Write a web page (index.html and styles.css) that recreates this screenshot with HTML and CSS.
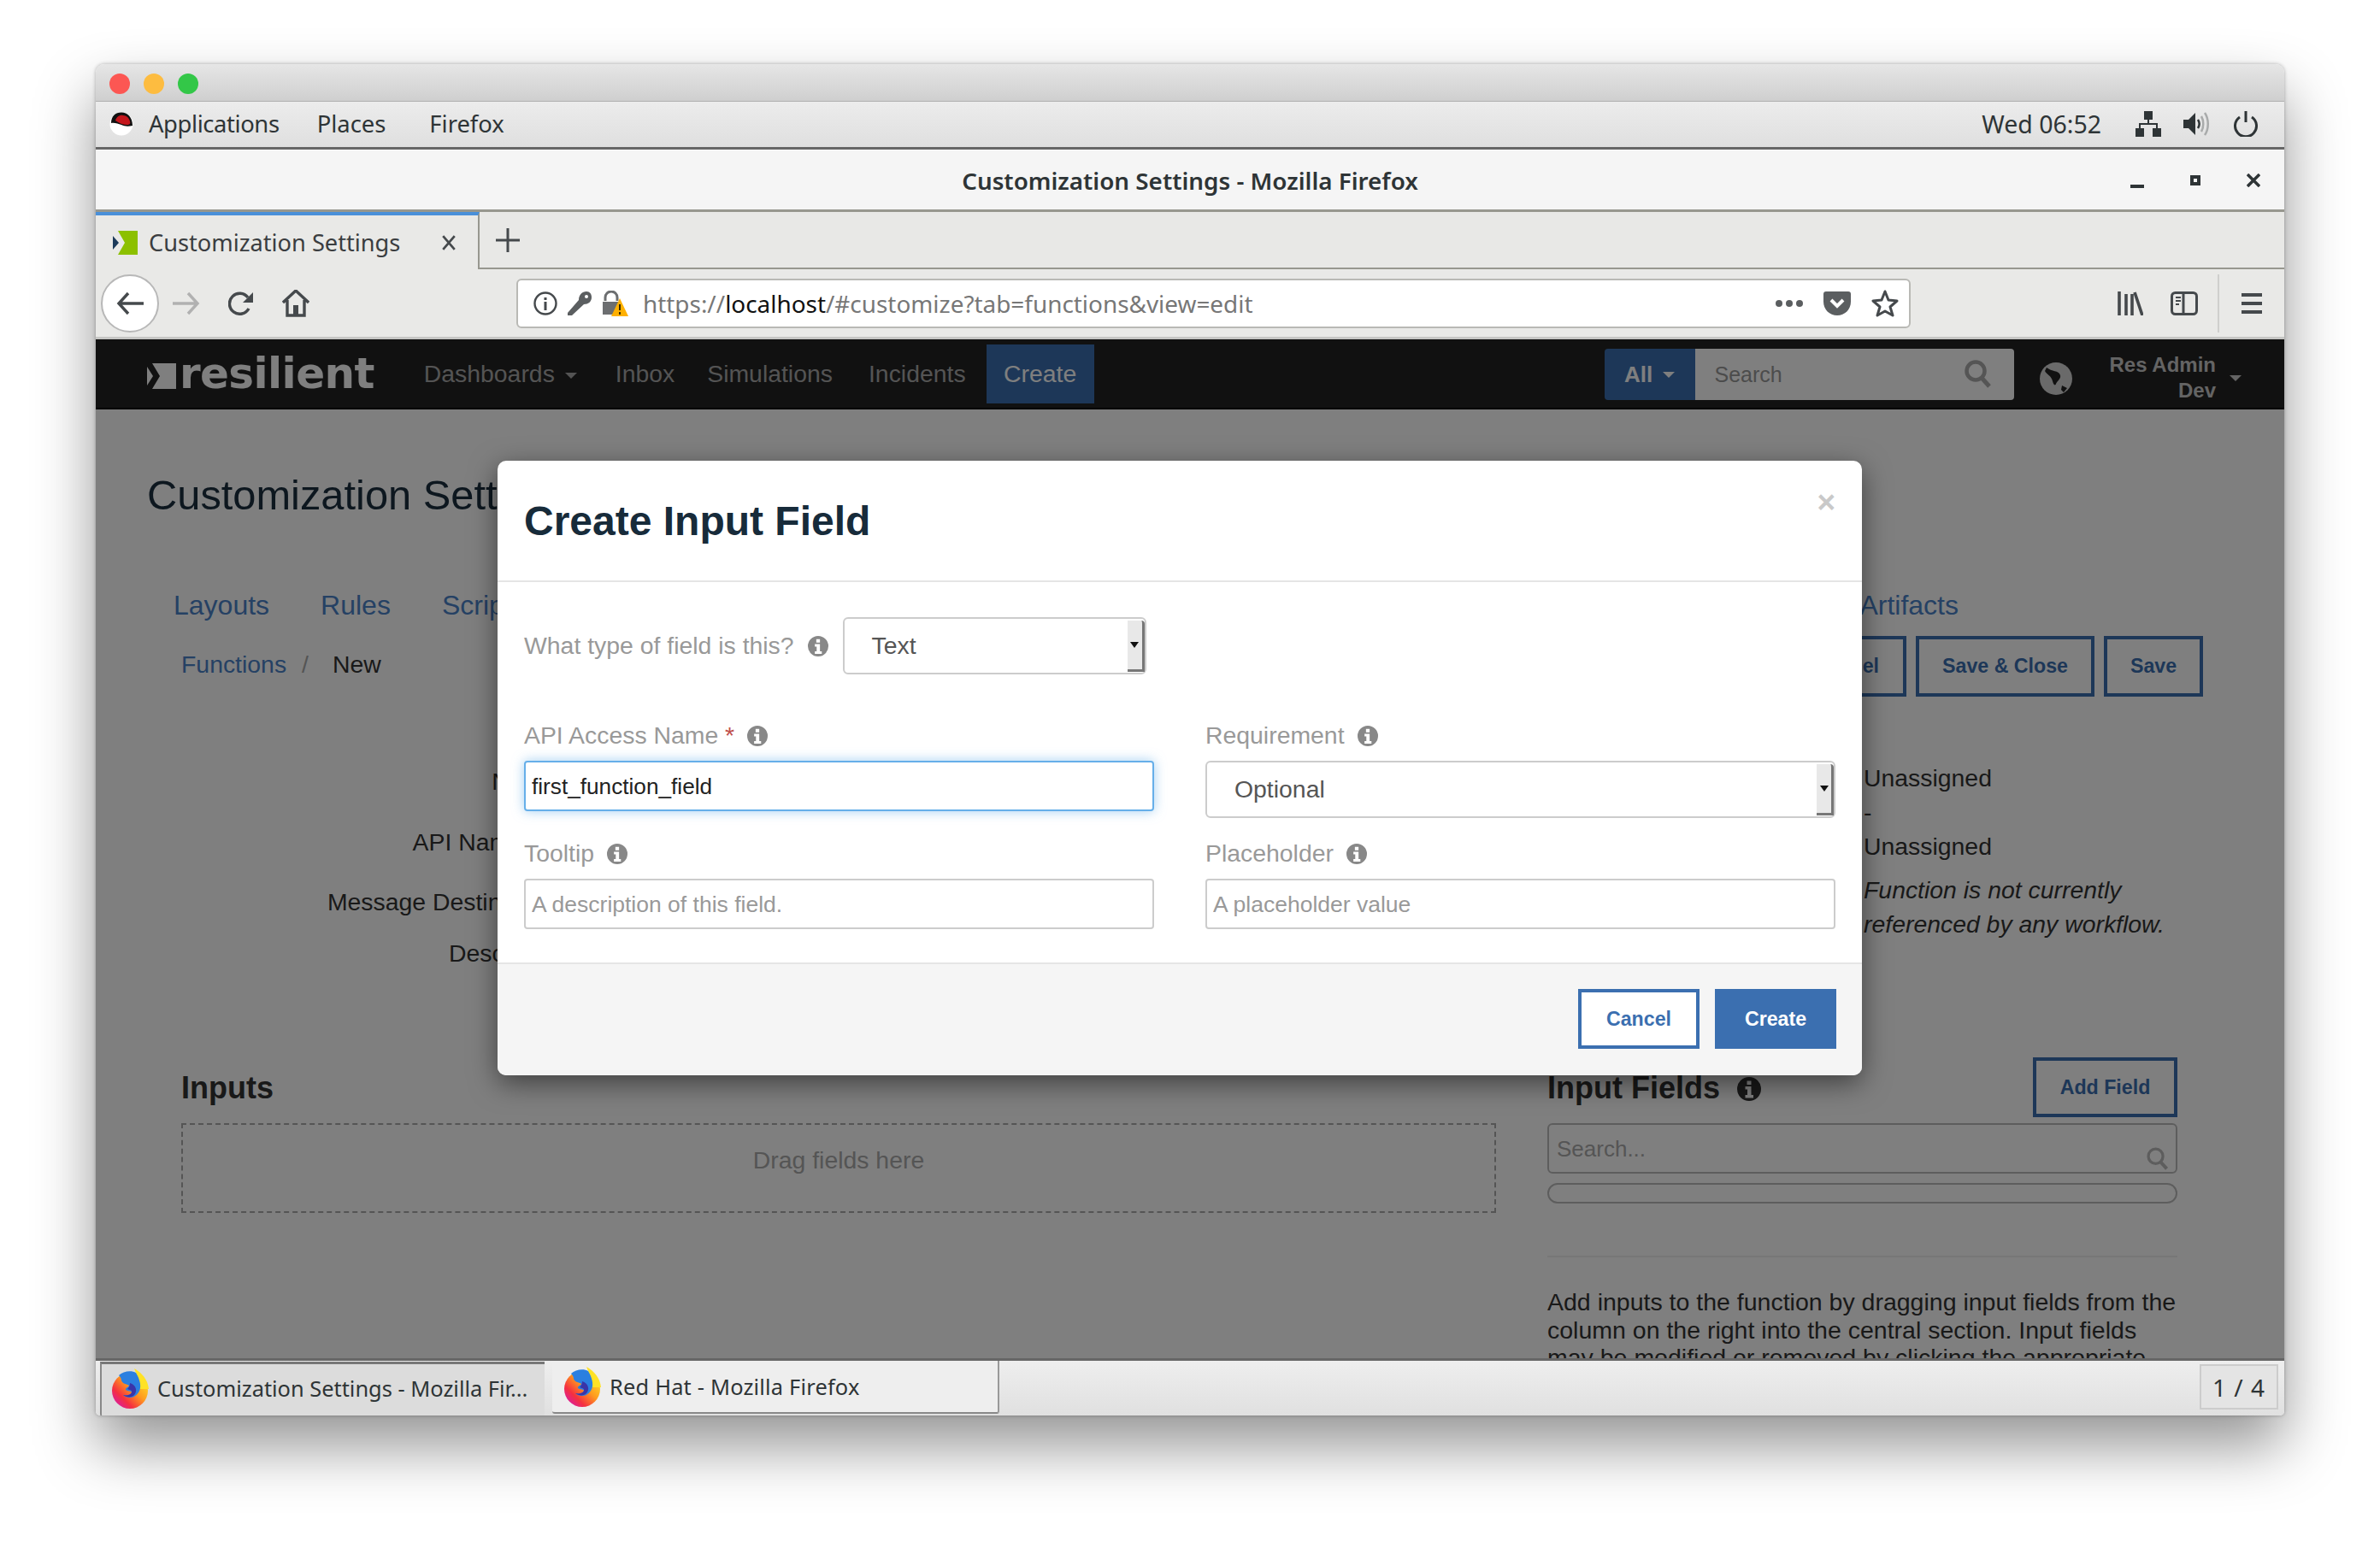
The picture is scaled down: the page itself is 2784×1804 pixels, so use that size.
FILE: index.html
```html
<!DOCTYPE html>
<html lang="en">
<head>
    <meta charset="UTF-8">
    <title>Customization Settings - Mozilla Firefox</title>
    <link rel="stylesheet" href="styles.css">
</head>
<body>
    <div class="window">
        <div class="mac-bar">
            <span class="dot dot-red"></span>
            <span class="dot dot-yellow"></span>
            <span class="dot dot-green"></span>
        </div>

        <div class="gnome-bar">
            <svg class="redhat" viewBox="0 0 28 28">
                <circle cx="14" cy="14" r="13.500" fill="#fff"/>
                <path d="M2 13C2 5 7 .5 14 .5S27 6 27 16c-5 1-9 1-13-1-4-1-8-3-12-2z" fill="#111"/>
                <path d="M7 10c1-4 5-7 9-6 4 0 7 3 8 7 1 3-1 4-3 4-5 0-10-2-14-5z" fill="#c4161c"/>
            </svg>
            <span class="gnome-item gnome-apps">Applications</span>
            <span class="gnome-item gnome-places">Places</span>
            <span class="gnome-item gnome-firefox">Firefox</span>
            <span class="gnome-clock">Wed 06:52</span>
            <svg class="tray tray-network" viewBox="0 0 30 30">
                <path d="M10 0h10v10h-4v4h10v6h4v10H20V20h4v-4H6v4h4v10H0V20h4v-6h10v-4h-4z" fill="#2e3436"/>
            </svg>
            <svg class="tray tray-sound" viewBox="0 0 30 30">
                <path d="M0 10h6l8-8v26l-8-8H0z" fill="#2e3436"/>
                <path d="M17 10c2 3 2 7 0 10" stroke="#2e3436" stroke-width="2.500" fill="none"/>
                <path d="M21 6c3 5 3 13 0 18M25 2c5 7 5 19 0 26" stroke="#a9abab" stroke-width="2.500" fill="none"/>
            </svg>
            <svg class="tray tray-power" viewBox="0 0 30 30">
                <path d="M8 7a12.500 12.500 0 1 0 14 0" stroke="#2e3436" stroke-width="3" fill="none"/>
                <path d="M15 0v13" stroke="#2e3436" stroke-width="3"/>
            </svg>
        </div>

        <div class="title-bar">
            <span class="title-text">Customization Settings - Mozilla Firefox</span>
            <div class="win-controls">
                <span class="win-min"></span>
                <span class="win-max"></span>
                <svg class="win-close" viewBox="0 0 16 16"><path d="M1 1l14 14M15 1L1 15" stroke="#2e3436" stroke-width="3.500"/></svg>
            </div>
        </div>

        <div class="tab-bar">
            <div class="tab">
                <svg class="favicon" viewBox="0 0 29 28">
                    <path d="M0 6l7 8-7 8z" fill="#1c3a5a"/>
                    <path d="M6 0h23v28H6l8-14z" fill="#8cc000"/>
                </svg>
                <span class="tab-title">Customization Settings</span>
                <svg class="tab-close" viewBox="0 0 16 16"><path d="M2 1l12 14M14 1L2 15" stroke="#45494c" stroke-width="2.400"/></svg>
            </div>
            <svg class="new-tab" viewBox="0 0 28 28"><path d="M14 0v28M0 14h28" stroke="#45494c" stroke-width="3"/></svg>
        </div>

        <div class="toolbar">
            <div class="nav-back">
                <svg viewBox="0 0 32 28"><path d="M14 2L3 14l11 12M3 14h29" stroke="#45494c" stroke-width="3.400" fill="none"/></svg>
            </div>
            <svg class="tool-icon tool-forward" viewBox="0 0 32 28"><path d="M18 2l11 12-11 12M29 14H0" stroke="#b1b1b1" stroke-width="3.400" fill="none"/></svg>
            <svg class="tool-icon tool-reload" viewBox="0 0 30 28"><path d="M24 20a12 12 0 1 1-1-13" stroke="#45494c" stroke-width="3.400" fill="none"/><path d="M29 1v12H17z" fill="#45494c"/></svg>
            <svg class="tool-icon tool-home" viewBox="0 0 32 32"><path d="M1 15L16 1l15 14M6 12v18h20V12" stroke="#45494c" stroke-width="3.400" fill="none"/><path d="M13 18h6v12h-6z" fill="#45494c"/></svg>

            <div class="url-bar">
                <svg class="url-icon url-info" viewBox="0 0 28 28"><circle cx="14" cy="14" r="12.500" stroke="#45494c" stroke-width="2.400" fill="none"/><path d="M14 7v3M14 12v10" stroke="#45494c" stroke-width="3"/></svg>
                <svg class="url-icon url-key" viewBox="0 0 28 28"><path d="M0 25L13 10C13 4 17 0 22 0c4 0 6 3 6 7 0 5-4 8-9 8L5 28H0z" fill="#5b5e60"/><circle cx="22" cy="6" r="2" fill="#fff"/></svg>
                <svg class="url-icon url-lock" viewBox="0 0 30 30">
                    <path d="M3 12V8a7 7 0 0 1 14 0v4" stroke="#6c6e70" stroke-width="3" fill="none"/>
                    <path d="M0 13h20v15H0z" fill="#6c6e70"/>
                    <path d="M20 9l10 21H10z" fill="#ffb000"/>
                    <path d="M20 16v7M20 25v3" stroke="#3a2a00" stroke-width="2"/>
                </svg>
                <span class="url-text">https://<span class="url-host">localhost</span>/#customize?tab=functions&amp;view=edit</span>
                <span class="url-more"><i></i><i></i><i></i></span>
                <svg class="url-icon url-pocket" viewBox="0 0 32 28"><path d="M3 0h26a3 3 0 0 1 3 3v9c0 9-7 16-16 16S0 21 0 12V3a3 3 0 0 1 3-3z" fill="#5b5e60"/><path d="M9 10l7 7 7-7" stroke="#fff" stroke-width="4" fill="none"/></svg>
                <svg class="url-icon url-star" viewBox="0 0 32 32"><path d="M16 2l4 10 10 1-8 7 3 10-9-5-9 5 3-10-8-7 10-1z" stroke="#45494c" stroke-width="3" fill="none" stroke-linejoin="round"/></svg>
            </div>

            <svg class="tool-icon tool-library" viewBox="0 0 30 28"><path d="M2 0v28M10 3v25M17 3v25M20 1l9 27" stroke="#45494c" stroke-width="3.600" fill="none"/></svg>
            <svg class="tool-icon tool-sidebar" viewBox="0 0 32 28"><rect x="1.500" y="1.500" width="29" height="25" rx="4" stroke="#45494c" stroke-width="3" fill="none"/><path d="M15 2v24" stroke="#45494c" stroke-width="3"/><path d="M6 7h6M6 11h6M6 15h4" stroke="#45494c" stroke-width="2"/></svg>
            <span class="tool-sep"></span>
            <svg class="tool-icon tool-menu" viewBox="0 0 24 24"><path d="M0 2h24M0 12h24M0 22h24" stroke="#45494c" stroke-width="4"/></svg>
        </div>

        <div class="viewport">
            <nav class="app-nav">
                <div class="logo">
                    <svg viewBox="0 0 34 30"><path d="M0 4l7 11-7 11z" fill="#fff"/><path d="M6 0h28v30H6l9-15z" fill="#fff"/></svg>
                    <span class="logo-word">resilient</span>
                </div>
                <ul class="app-links">
                    <li class="link-dash">Dashboards <span class="caret"></span></li>
                    <li class="link-inbox">Inbox</li>
                    <li class="link-sim">Simulations</li>
                    <li class="link-inc">Incidents</li>
                    <li class="link-create">Create</li>
                </ul>
                <div class="nav-search">
                    <span class="search-all">All <span class="caret caret-light"></span></span>
                    <div class="search-box">
                        <span>Search</span>
                        <svg viewBox="0 0 32 34"><circle cx="13" cy="13" r="10.500" stroke="#555" stroke-width="4.500" fill="none"/><path d="M20 21l9 10" stroke="#555" stroke-width="5"/></svg>
                    </div>
                </div>
                <svg class="globe" viewBox="0 0 38 38">
                    <circle cx="19" cy="19" r="19" fill="#d4d4d4"/>
                    <path d="M8 6c6 5 14 3 16 9 1 4-3 6-5 10-1 3-3 1-4-3-1-6-7-8-9-12zM26 27l6 3-4 5-3-3z" fill="#222"/>
                </svg>
                <div class="user-menu">
                    <div class="user-name">
                        <span>Res Admin</span>
                        <span>Dev</span>
                    </div>
                    <span class="caret"></span>
                </div>
            </nav>

            <main class="page">
                <h1>Customization Settings</h1>
                <ul class="page-tabs">
                    <li>Layouts</li>
                    <li>Rules</li>
                    <li>Scripts</li>
                    <li class="page-tab-artifacts">Artifacts</li>
                </ul>
                <div class="crumb-row">
                    <div class="crumbs">
                        <a>Functions</a><span class="crumb-sep">/</span><span>New</span>
                    </div>
                    <div class="crumb-actions">
                        <button class="btn-outline btn-cancel">Cancel</button>
                        <button class="btn-outline btn-saveclose">Save &amp; Close</button>
                        <button class="btn-outline btn-save">Save</button>
                    </div>
                </div>
                <div class="fn-form">
                    <div class="fn-labels">
                        <div class="fn-label fn-name">Name</div>
                        <div class="fn-label fn-api">API Name</div>
                        <div class="fn-label fn-dest">Message Destination</div>
                        <div class="fn-label fn-desc">Description</div>
                    </div>
                    <div class="fn-status">
                        <p>Unassigned</p>
                        <p>-</p>
                        <p>Unassigned</p>
                        <p class="fn-note">Function is not currently<br>referenced by any workflow.</p>
                    </div>
                </div>
                <div class="designer">
                    <section class="inputs">
                        <h2>Inputs</h2>
                        <div class="dropzone">Drag fields here</div>
                    </section>
                    <section class="fields">
                        <div class="fields-head">
                            <h2>Input Fields <svg class="info info-dark" viewBox="0 0 28 28"><use href="#info-glyph"/></svg></h2>
                            <button class="btn-outline btn-add">Add Field</button>
                        </div>
                        <div class="fields-search">
                            <span>Search...</span>
                            <svg viewBox="0 0 32 34"><circle cx="13" cy="13" r="10.500" stroke="#bbb" stroke-width="4" fill="none"/><path d="M20 21l9 10" stroke="#bbb" stroke-width="5"/></svg>
                        </div>
                        <div class="fields-bar"></div>
                        <hr class="fields-rule">
                        <p class="fields-help">Add inputs to the function by dragging input fields from the column on the right into the central section. Input fields may be modified or removed by clicking the appropriate icon.</p>
                    </section>
                </div>
            </main>

            <div class="backdrop"></div>

            <div class="modal">
                <div class="modal-header">
                    <h3>Create Input Field</h3>
                    <span class="modal-close">×</span>
                </div>
                <div class="modal-body">
                    <div class="type-row">
                        <label>What type of field is this?</label>
                        <svg class="info" viewBox="0 0 28 28"><use href="#info-glyph"/></svg>
                        <div class="fake-select type-select">
                            <span>Text</span>
                            <span class="select-arrow"></span>
                        </div>
                    </div>
                    <div class="field-grid">
                        <div class="field">
                            <label>API Access Name <em>*</em><svg class="info" viewBox="0 0 28 28"><use href="#info-glyph"/></svg></label>
                            <input class="text-input is-focus" value="first_function_field">
                        </div>
                        <div class="field">
                            <label>Requirement<svg class="info" viewBox="0 0 28 28"><use href="#info-glyph"/></svg></label>
                            <div class="fake-select">
                                <span>Optional</span>
                                <span class="select-arrow"></span>
                            </div>
                        </div>
                        <div class="field field-low">
                            <label>Tooltip<svg class="info" viewBox="0 0 28 28"><use href="#info-glyph"/></svg></label>
                            <input class="text-input" placeholder="A description of this field.">
                        </div>
                        <div class="field field-low">
                            <label>Placeholder<svg class="info" viewBox="0 0 28 28"><use href="#info-glyph"/></svg></label>
                            <input class="text-input" placeholder="A placeholder value">
                        </div>
                    </div>
                </div>
                <div class="modal-footer">
                    <button class="btn-outline btn-modal">Cancel</button>
                    <button class="btn-primary">Create</button>
                </div>
            </div>
        </div>

        <div class="task-bar">
            <div class="task task-active">
                <svg class="ff-icon" viewBox="0 0 44 47"><use href="#firefox-glyph"/></svg>
                <span>Customization Settings - Mozilla Fir...</span>
            </div>
            <div class="task">
                <svg class="ff-icon" viewBox="0 0 44 47"><use href="#firefox-glyph"/></svg>
                <span>Red Hat - Mozilla Firefox</span>
            </div>
            <div class="pager">1 / 4</div>
        </div>
    </div>

    <!-- shared icons -->
    <svg class="icon-defs" width="0" height="0">
        <defs>
            <linearGradient id="ff-flame" x1="0.9" y1="0.1" x2="0.15" y2="0.85">
                <stop offset="0" stop-color="#ffe226"/>
                <stop offset="0.45" stop-color="#ff9a1f"/>
                <stop offset="0.8" stop-color="#f5303f"/>
                <stop offset="1" stop-color="#e0218a"/>
            </linearGradient>
            <g id="info-glyph">
                <path fill-rule="evenodd" fill="currentColor" d="M14 0a14 14 0 1 1 0 28a14 14 0 0 1 0-28zM11.500 4.500h5v4.500h-5zM9.500 11h7v10h2.500v3.500h-9.500V21h2.500v-6.500h-2.500z"/>
            </g>
            <g id="firefox-glyph">
                <circle cx="22" cy="26" r="21" fill="url(#ff-flame)"/>
                <path d="M27 0c9 5 16 13 17 24H32C33 15 30 7 27 0z" fill="#ffe226"/>
                <path d="M9 8C14 3 24 2 29 5c3 5 6 12 5 18-1 6-6 11-12 11-3 0-6-1-8-3 4 1 9 0 10-3 0-2-5-1-7-3-1-2 3-3 4-5-3-2-8-2-9-6 0-2-1-4-3-6z" fill="#2b7fe0"/>
                <path d="M22 17c7 2 10 10 4 15-3 2-8 2-12-1 4 1 9 0 10-3 1-3-3-3-5-4 2-2 3-4 3-7z" fill="#3a34a8"/>
            </g>
        </defs>
    </svg>
</body>
</html>
```

FILE: styles.css
```css
* {
    box-sizing: border-box;
}

html, body {
    margin: 0;
    height: 100%;
    overflow: hidden;
}

body {
    background: #fff;
    padding: 75px 112px 0;
    font-family: "Liberation Sans", Arial, sans-serif;
    font-size: 28.4px;
    color: #333;
}

.icon-defs {
    position: absolute;
}

.window {
    width: 2560px;
    height: 1581px;
    display: flex;
    flex-direction: column;
    border-radius: 10px 10px 5px 5px;
    box-shadow: 0 36px 70px rgba(0, 0, 0, 0.42), 0 0 4px rgba(0, 0, 0, 0.3);
    overflow: hidden;
}

/* mac chrome */
.mac-bar {
    height: 44px;
    flex: none;
    display: flex;
    align-items: center;
    gap: 16px;
    padding-left: 16px;
    background: linear-gradient(#e6e6e6, #cfcfcf);
    border-bottom: 1px solid #b0b0b0;
}

.dot {
    width: 24px;
    height: 24px;
    border-radius: 50%;
    margin-top: 3px;
}

.dot-red { background: #fc5753; }
.dot-yellow { background: #fdbc40; }
.dot-green { background: #33c748; }

/* gnome top bar */
.gnome-bar {
    height: 56px;
    flex: none;
    display: flex;
    align-items: center;
    padding: 0 0 2px 16px;
    background: linear-gradient(#ececec, #dfdfdf);
    border-bottom: 3px solid #666;
    font-family: "Noto Sans", sans-serif;
    font-size: 27.4px;
    color: #2e3436;
}

.redhat {
    width: 28px;
    height: 28px;
}

.gnome-apps { margin-left: 18px; letter-spacing: -0.4px; }
.gnome-places { margin-left: 44px; }
.gnome-firefox { margin-left: 51px; }

.gnome-clock {
    margin-left: auto;
    font-size: 28.5px;
}

.tray {
    width: 30px;
    height: 30px;
}

.tray-network { margin-left: 40px; }
.tray-sound { margin-left: 26px; }
.tray-power { margin-left: 28px; margin-right: 30px; }

/* window title */
.title-bar {
    height: 73px;
    flex: none;
    position: relative;
    display: flex;
    align-items: center;
    justify-content: center;
    background: #f5f5f5;
    border-top: 1px solid #fff;
    border-bottom: 3px solid #97978f;
    font-family: "Noto Sans", sans-serif;
    font-size: 27.8px;
    font-weight: 600;
    color: #2e3436;
}

.win-controls {
    position: absolute;
    right: 28px;
    top: 0;
    bottom: 0;
    display: flex;
    align-items: center;
}

.win-min {
    width: 16px;
    height: 4px;
    margin-top: 14px;
    background: #2e3436;
}

.win-max {
    width: 12px;
    height: 12px;
    margin-left: 54px;
    border: 4px solid #2e3436;
}

.win-close {
    width: 16px;
    height: 16px;
    margin-left: 54px;
}

/* firefox tabs */
.tab-bar {
    height: 67px;
    flex: none;
    display: flex;
    align-items: center;
    background: #e8e8e6;
    border-bottom: 2px solid #97978f;
}

.tab {
    width: 449px;
    height: 67px;
    display: flex;
    align-items: center;
    padding: 0 0 0 20px;
    border-top: 4px solid #4a90d9;
    border-right: 2px solid #97978f;
    background: #e9e9e7;
    font-family: "Noto Sans", sans-serif;
    font-size: 27.2px;
    color: #3a3d40;
    margin-bottom: -2px;
    align-self: flex-start;
}

.favicon {
    width: 29px;
    height: 28px;
}

.tab-title {
    margin-left: 13px;
}

.tab-close {
    width: 18px;
    height: 18px;
    margin-left: auto;
    margin-right: 25px;
}

.new-tab {
    width: 28px;
    height: 28px;
    margin-left: 19px;
}

/* firefox toolbar */
.toolbar {
    height: 82px;
    flex: none;
    display: flex;
    align-items: center;
    padding-left: 6px;
    background: #e9e9e7;
    border-bottom: 3px solid #c6c6c4;
}

.nav-back {
    width: 68px;
    height: 68px;
    flex: none;
    display: flex;
    align-items: center;
    justify-content: center;
    border: 2px solid #b8b8b8;
    border-radius: 50%;
    background: #fff;
}

.nav-back svg {
    width: 32px;
    height: 28px;
}

.tool-icon {
    flex: none;
    height: 28px;
}

.tool-forward { width: 32px; margin-left: 16px; }
.tool-reload { width: 30px; margin-left: 33px; }
.tool-home { width: 32px; height: 32px; margin-left: 33px; }

.url-bar {
    width: 1631px;
    height: 58px;
    flex: none;
    display: flex;
    align-items: center;
    margin-left: 242px;
    padding-left: 18px;
    background: #fff;
    border: 2px solid #b9b9b5;
    border-radius: 6px;
    font-family: "Noto Sans", sans-serif;
    font-size: 27.9px;
    color: #777;
}

.url-icon {
    flex: none;
    width: 28px;
    height: 28px;
}

.url-key { margin-left: 12px; }
.url-lock { width: 30px; height: 30px; margin-left: 13px; }

.url-text {
    margin-left: 17px;
}

.url-host {
    color: #111;
}

.url-more {
    margin-left: auto;
    display: flex;
    gap: 4px;
}

.url-more i {
    width: 8px;
    height: 8px;
    border-radius: 50%;
    background: #5b5e60;
}

.url-pocket { width: 32px; margin-left: 24px; }
.url-star { width: 32px; height: 32px; margin-left: 24px; margin-right: 12px; }

.tool-library { width: 30px; margin-left: 242px; }
.tool-sidebar { width: 32px; margin-left: 32px; }

.tool-sep {
    width: 2px;
    height: 68px;
    margin-left: 23px;
    background: #cfcfcd;
}

.tool-menu {
    width: 24px;
    height: 24px;
    margin-left: 26px;
}

/* page inside the browser */
.viewport {
    flex: 1;
    position: relative;
    overflow: hidden;
    background: #fff;
    min-height: 0;
}

.app-nav {
    height: 82px;
    display: flex;
    align-items: center;
    background: #222;
    border-bottom: 2px solid #000;
}

.logo {
    display: flex;
    align-items: center;
    margin-left: 60px;
    color: #fff;
}

.logo svg {
    width: 34px;
    height: 30px;
    margin-top: 6px;
}

.logo-word {
    margin-left: 4px;
    font-family: "DejaVu Sans", sans-serif;
    font-weight: 700;
    font-size: 50px;
    line-height: 1;
    letter-spacing: -0.6px;
}

.app-links {
    list-style: none;
    display: flex;
    align-items: center;
    margin: 0;
    padding: 0;
    font-size: 28.4px;
    color: #a8a8a8;
}

.link-dash { margin-left: 58px; }
.link-inbox { margin-left: 45px; }
.link-sim { margin-left: 38px; }
.link-inc { margin-left: 42px; }

.link-create {
    margin-left: 24px;
    height: 69px;
    width: 126px;
    display: flex;
    align-items: center;
    justify-content: center;
    background: #3b6fb0;
    color: #fff;
}

.caret {
    display: inline-block;
    width: 0;
    height: 0;
    margin-left: 4px;
    vertical-align: middle;
    border-top: 7px solid currentColor;
    border-left: 7px solid transparent;
    border-right: 7px solid transparent;
}

.nav-search {
    display: flex;
    margin-left: auto;
    height: 60px;
    margin-top: 2px;
}

.search-all {
    width: 106px;
    display: flex;
    align-items: center;
    justify-content: center;
    gap: 8px;
    background: #3b6fb0;
    border-radius: 4px 0 0 4px;
    color: #fff;
    font-size: 26px;
    font-weight: 700;
}

.search-box {
    width: 373px;
    display: flex;
    align-items: center;
    justify-content: space-between;
    padding: 0 26px 0 23px;
    background: #fff;
    border-radius: 0 4px 4px 0;
    font-size: 25px;
    color: #999;
}

.search-box svg {
    width: 32px;
    height: 34px;
}

.search-box svg circle,
.search-box svg path {
    stroke: #aaa;
}

.globe {
    width: 38px;
    height: 38px;
    margin-left: 30px;
    margin-top: 11px;
}

.user-menu {
    display: flex;
    align-items: center;
    margin-left: 44px;
    margin-right: 50px;
    margin-top: 10px;
    color: #c8c8c8;
}

.user-name {
    display: flex;
    flex-direction: column;
    align-items: flex-end;
    font-size: 24px;
    font-weight: 700;
    line-height: 30px;
}

.user-menu .caret {
    margin-left: 16px;
}

.page {
    height: 1110px;
    overflow: hidden;
    padding: 0 0 0 61px;
    color: #333;
}

.page h1 {
    margin: 0 0 0 -1px;
    padding-top: 64px;
    font-size: 48.8px;
    font-weight: 400;
    line-height: 72px;
    color: #1a2e3f;
}

.page-tabs {
    list-style: none;
    display: flex;
    margin: 73px 0 0;
    padding: 0 0 0 30px;
    font-size: 32px;
    color: #4a82c8;
    line-height: 40px;
}

.page-tabs li {
    margin-right: 60px;
}

.page-tab-artifacts {
    margin-left: auto;
    margin-right: 381px !important;
}

.crumb-row {
    display: flex;
    align-items: flex-start;
    justify-content: space-between;
    padding: 16px 95px 0 39px;
}

.crumbs {
    display: flex;
    margin-top: 16px;
    line-height: 34px;
}

.crumbs a {
    color: #4a82c8;
}

.crumb-sep {
    margin: 0 28px 0 18px;
    color: #aaa;
}

.crumb-actions {
    display: flex;
    gap: 11px;
}

.btn-outline {
    height: 71px;
    padding: 0;
    background: #fff;
    border: 4px solid #3b6fb0;
    color: #3b6fb0;
    font-family: "Liberation Sans", sans-serif;
    font-size: 23.2px;
    font-weight: 700;
}

.btn-cancel { width: 140px; }
.btn-saveclose { width: 209px; }
.btn-save { width: 116px; }

.fn-form {
    display: flex;
    justify-content: space-between;
    height: 428px;
    padding-top: 75px;
}

.fn-labels {
    width: 494px;
    display: flex;
    flex-direction: column;
    text-align: right;
}

.fn-label {
    line-height: 36px;
}

.fn-name { margin-top: 6px; padding-right: 16px; }
.fn-api { margin-top: 35px; padding-right: 55px; }
.fn-dest { margin-top: 34px; padding-right: 19px; }
.fn-desc { margin-top: 24px; }

.fn-status {
    width: 492px;
    margin-left: auto;
    line-height: 40px;
}

.fn-status p {
    margin: 0;
    line-height: 40px;
}

.fn-note {
    margin-top: 11px !important;
    font-style: italic;
}

.designer {
    display: grid;
    grid-template-columns: 1538px 737px;
    column-gap: 60px;
    padding-left: 39px;
}

.designer h2 {
    margin: 0;
    font-size: 36px;
    line-height: 44px;
    color: #333;
}

.inputs h2 {
    margin-top: 8px;
}

.dropzone {
    height: 105px;
    margin-top: 19px;
    padding-top: 25px;
    border: 2px dashed #aaa;
    text-align: center;
    color: #aaa;
}

.fields-head {
    display: flex;
    justify-content: space-between;
    align-items: flex-start;
}

.fields-head h2 {
    margin-top: 8px;
}

.btn-add {
    width: 169px;
    height: 70px;
    margin-top: -6px;
}

.fields-search {
    height: 59px;
    margin-top: 7px;
    display: flex;
    justify-content: space-between;
    align-items: flex-start;
    padding: 13px 8px 0 9px;
    background: #fff;
    border: 2px solid #bbb;
    border-radius: 6px;
    font-size: 26px;
    color: #aaa;
}

.fields-search svg {
    width: 26px;
    height: 28px;
    margin-top: 13px;
}

.fields-bar {
    height: 24px;
    margin-top: 11px;
    border: 2px solid #bbb;
    border-radius: 12px;
    background: #fff;
}

.fields-rule {
    height: 2px;
    margin: 61px 0 0;
    border: 0;
    background: #eee;
}

.fields-help {
    margin: 36px 0 0;
    font-size: 28.5px;
    line-height: 32.5px;
}

.info {
    width: 24px;
    height: 24px;
    color: #888;
    vertical-align: -3px;
}

.info-dark {
    width: 28px;
    height: 28px;
    margin-left: 10px;
    color: #333;
}

.backdrop {
    position: absolute;
    inset: 0;
    background: rgba(0, 0, 0, 0.5);
}

/* dialog */
.modal {
    position: absolute;
    left: 470px;
    top: 142px;
    width: 1596px;
    height: 719px;
    display: flex;
    flex-direction: column;
    background: #fff;
    border-radius: 10px;
    box-shadow: 0 9px 32px rgba(0, 0, 0, 0.5);
}

.modal-header {
    height: 142px;
    flex: none;
    position: relative;
    padding: 43px 30px 0 31px;
    border-bottom: 2px solid #e5e5e5;
}

.modal-header h3 {
    margin: 0;
    font-size: 48px;
    line-height: 56px;
    color: #172b3a;
}

.modal-close {
    position: absolute;
    right: 31px;
    top: 30px;
    font-size: 37px;
    font-weight: 700;
    line-height: 1;
    color: #c9c9c9;
}

.modal-body {
    flex: 1;
    padding: 0 31px;
}

.type-row {
    display: flex;
    align-items: center;
    margin-top: 41px;
    height: 67px;
    font-size: 28.4px;
    color: #999;
}

.type-row .info {
    margin-left: 16px;
}

.fake-select {
    height: 67px;
    display: flex;
    align-items: center;
    justify-content: space-between;
    padding-left: 32px;
    background: #fff;
    border: 2px solid #ccc;
    border-radius: 6px;
    color: #555;
}

.type-select {
    width: 355px;
    margin-left: 17px;
}

.select-arrow {
    width: 20px;
    height: 60px;
    display: flex;
    align-items: center;
    justify-content: center;
    background: #e8e8e8;
    border-right: 3px solid #777;
    border-bottom: 3px solid #777;
    border-radius: 0 4px 0 0;
}

.select-arrow::after {
    content: "";
    border-top: 7px solid #111;
    border-left: 5px solid transparent;
    border-right: 5px solid transparent;
}

.field-grid {
    display: grid;
    grid-template-columns: 737px 737px;
    column-gap: 60px;
    margin-top: 54px;
}

.field label {
    display: block;
    height: 34px;
    line-height: 34px;
    color: #999;
}

.field label em {
    font-style: normal;
    color: #c0504d;
}

.field .info {
    margin-left: 15px;
}

.text-input {
    display: block;
    width: 100%;
    height: 59px;
    margin-top: 13px;
    padding: 2px 7px 0;
    background: #fff;
    border: 2px solid #ccc;
    border-radius: 4px;
    font-family: "Liberation Sans", sans-serif;
    font-size: 26.2px;
    color: #222;
    outline: none;
}

.text-input::placeholder {
    color: #999;
    font-size: 26.5px;
}

.is-focus {
    border-color: #66afe9;
    box-shadow: 0 0 14px rgba(102, 175, 233, 0.6);
}

.field-grid .fake-select {
    margin-top: 13px;
}

.field-low {
    margin-top: 24px;
}

.modal-footer {
    height: 132px;
    flex: none;
    display: flex;
    justify-content: flex-end;
    align-items: flex-start;
    gap: 18px;
    padding: 29px 30px 0 0;
    background: #f5f5f5;
    border-top: 2px solid #e5e5e5;
    border-radius: 0 0 10px 10px;
}

.btn-modal,
.btn-primary {
    width: 142px;
    height: 70px;
}

.btn-primary {
    padding: 0;
    background: #3b6fb0;
    border: 0;
    color: #fff;
    font-family: "Liberation Sans", sans-serif;
    font-size: 23.2px;
    font-weight: 700;
}

/* bottom window list */
.task-bar {
    height: 67px;
    flex: none;
    display: flex;
    align-items: flex-start;
    padding-left: 5px;
    background: linear-gradient(#eee, #e0e0e0);
    border-top: 3px solid #666;
    font-family: "Noto Sans", sans-serif;
    font-size: 25.4px;
    color: #2e3436;
}

.task {
    width: 523px;
    height: 62px;
    display: flex;
    align-items: center;
    padding-left: 13px;
    margin-left: 9px;
    background: #eee;
    border-right: 2px solid #999;
    border-bottom: 2px solid #888;
    border-radius: 0 0 3px 3px;
    letter-spacing: 0.2px;
}

.task span {
    margin-left: 10px;
}

.task-active {
    width: 520px;
    height: 64px;
    margin-left: 0;
    margin-top: 1px;
    padding-left: 11px;
    padding-bottom: 5px;
    background: #dcdcdc;
    border: 0;
    border-left: 2px solid #888;
    border-top: 3px solid #777;
    letter-spacing: 0;
}

.ff-icon {
    width: 44px;
    height: 47px;
    flex: none;
}

.pager {
    width: 92px;
    height: 53px;
    margin-left: auto;
    margin-top: 4px;
    margin-right: 7px;
    display: flex;
    align-items: center;
    justify-content: center;
    background: #e4e4e4;
    border: 2px solid #ccc;
    font-size: 28px;
    letter-spacing: 1px;
}
```
